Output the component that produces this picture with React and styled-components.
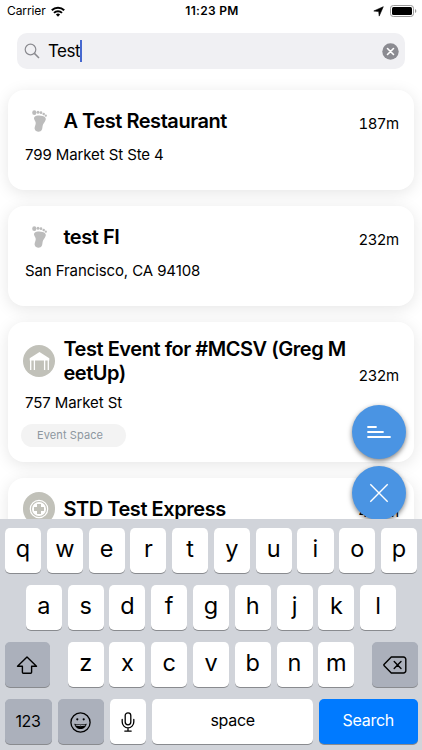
import * as React from "react"
import styled, { createGlobalStyle } from "styled-components"

const FONT = `Inter, "Liberation Sans", sans-serif`
const BLUE = "#4a94e3"
const VENUE = "#c1c1b9"

const GlobalStyle = createGlobalStyle`
	* {
		box-sizing: border-box;
	}
	body {
		margin: 0;
		background: #fff;
		color: #000;
		font-family: ${FONT};
	}
	svg {
		display: block;
		flex: none;
	}
`

const Screen = styled.div`
	position: relative;
	width: 422px;
	height: 750px;
	overflow: hidden;
	display: flex;
	flex-direction: column;
	background: #fff;
`
const StatusBar = styled.div`
	display: grid;
	grid-template-columns: 1fr auto 1fr;
	align-items: center;
	height: 22px;
	padding: 0 5px 0 7px;
	font-size: 12px;
	line-height: 22px;
`
const StatusLeft = styled.div`
	display: flex;
	align-items: center;
	gap: 5px;
	letter-spacing: -0.1px;
`
const StatusRight = styled.div`
	display: flex;
	align-items: center;
	justify-content: flex-end;
	gap: 6px;
`
const Clock = styled.div`
	font-weight: 600;
	letter-spacing: 0.3px;
`
const SearchBar = styled.div`
	display: flex;
	align-items: center;
	height: 36px;
	margin: 11px 17px 0 17px;
	padding: 0 6.5px 0 7px;
	border-radius: 10px;
	background: #f0f0f3;
`
const Query = styled.div`
	margin-left: 8px;
	font-size: 17px;
	line-height: 22px;
	letter-spacing: -0.55px;
`
const Caret = styled.div`
	width: 2px;
	height: 22px;
	margin-right: auto;
	background: #4668cf;
`
const Results = styled.div`
	flex: 1;
	min-height: 0;
	overflow: hidden;
	display: flex;
	flex-direction: column;
	gap: 16px;
	padding: 21px 8px 0 8px;
`
const Card = styled.div`
	flex: none;
	height: ${(p) => (p.$tall ? "139.600px" : "100px")};
	padding: 15px 15px 0 15px;
	border-radius: 16px;
	background: #fff;
	box-shadow: 0 3px 16px rgba(0, 0, 0, 0.1);
`
const CardHead = styled.div`
	display: flex;
	align-items: center;
	gap: 8px;
	min-height: 32px;
`
const Badge = styled.div`
	display: flex;
	align-items: center;
	justify-content: center;
	flex: none;
	width: 32.4px;
	height: 32.4px;
	margin: -1px 0;
	padding-left: ${(p) => (p.$plain ? "1.500px" : "0")};
	border-radius: 50%;
	background: ${(p) => (p.$plain ? "none" : VENUE)};
`
const Heading = styled.div`
	flex: 1;
	display: flex;
	align-items: flex-end;
	justify-content: space-between;
`
const Title = styled.div`
	font-size: 20px;
	line-height: 24px;
	font-weight: 600;
	letter-spacing: -0.45px;
	white-space: pre;
`
const Distance = styled.div`
	font-size: 15px;
	line-height: 18px;
	letter-spacing: -0.6px;
	padding-right: 0.5px;
	font-variant-numeric: tabular-nums;
`
const Address = styled.div`
	margin: 8px 0 0 2px;
	font-size: 15px;
	line-height: 20px;
	letter-spacing: -0.1px;
`
const Tag = styled.div`
	width: 105px;
	height: 23px;
	margin: 11px 0 0 -2px;
	padding-left: 16px;
	border-radius: 12px;
	background: #f3f3f3;
	color: #8d979f;
	font-size: 11px;
	line-height: 22px;
	letter-spacing: 0.1px;
`
const Fabs = styled.div`
	position: absolute;
	right: 16px;
	top: 405px;
	display: flex;
	flex-direction: column;
	gap: 7px;
`
const Fab = styled.div`
	display: flex;
	align-items: center;
	justify-content: center;
	width: 54px;
	height: 54px;
	border-radius: 50%;
	background: ${BLUE};
	box-shadow: 0 2px 5px rgba(0, 0, 0, 0.5);
`
const Keyboard = styled.div`
	position: relative;
	flex: none;
	display: flex;
	flex-direction: column;
	gap: 11px;
	height: 231px;
	padding: 9px 4.5px 0;
	background: #d1d4da;
`
const KeyRow = styled.div`
	display: flex;
	justify-content: ${(p) => (p.$spread ? "space-between" : "center")};
	gap: ${(p) => (p.$spread ? "0" : "5.7px")};
	height: 46px;
`
const KeyGroup = styled.div`
	display: flex;
	gap: 5.7px;
`
const Key = styled.div`
	display: flex;
	align-items: center;
	justify-content: center;
	width: ${(p) => p.$w || 36.1}px;
	height: 45px;
	padding-bottom: 4px;
	border-radius: 5px;
	background: ${(p) => p.$bg || "#fff"};
	color: ${(p) => p.$color || "#000"};
	box-shadow: 0 1px 0 #898b8f;
	font-size: 23.5px;
	font-weight: 400;
`
const IconKey = styled(Key)`
	padding: 1px 0 0;
`
const WordKey = styled(Key)`
	padding-bottom: ${(p) => (p.$low ? "1px" : "4px")};
	font-size: 16px;
	letter-spacing: -0.3px;
`

const GREY_KEY = "#abb0bb"

const Foot = () => (
	<svg width="15" height="22" viewBox="0 0 15 22" fill="#bcbcbc">
		<ellipse cx="2.3" cy="2.7" rx="2.1" ry="2.4" />
		<circle cx="6" cy="2.2" r="1.5" />
		<circle cx="9" cy="2.700" r="1.35" />
		<circle cx="11.700" cy="3.900" r="1.25" />
		<circle cx="13.800" cy="5.700" r="1.15" />
		<path d="M2.4 7C4 5.300 8 5.200 10.600 6C13.300 6.800 14.200 8 13.600 10C13 12.200 11 13.500 10.600 16C10.300 18.200 10.400 20 8.500 21.200C6.500 22.200 3.200 21.500 2.700 19C2.200 16.800 3.900 15 3.700 12.800C3.500 10.500 1 9 2.400 7z" />
	</svg>
)

const Tent = () => (
	<svg width="21" height="20" viewBox="0 0 21 20">
		<path d="M10.500 1L20.300 7.300V9.600H.7V7.300z" fill="#fff" />
		<path d="M1.700 9V19M5.400 9v10M15.600 9v10M19.300 9v10" stroke="#fff" strokeWidth="1.300" />
	</svg>
)

const Medical = () => (
	<svg width="20" height="20" viewBox="0 0 20 20" fill="none">
		<circle cx="10" cy="10" r="8.700" stroke="#fff" strokeWidth="1.200" />
		<circle cx="10" cy="10" r="7" fill="#fff" />
		<path d="M8 5h4v3h3v4h-3v3H8v-3H5V8h3z" fill={VENUE} />
	</svg>
)

const ICONS = { foot: <Foot />, tent: <Tent />, medical: <Medical /> }

const places = [
	{ icon: "foot", title: "A Test Restaurant", distance: "187m", address: "799 Market St Ste 4" },
	{ icon: "foot", title: "test FI", distance: "232m", address: "San Francisco, CA 94108" },
	{
		icon: "tent",
		title: "Test Event for #MCSV (Greg M\neetUp)",
		distance: "232m",
		address: "757 Market St",
		tag: "Event Space",
	},
	{ icon: "medical", title: "STD Test Express", distance: "464m", address: "" },
]

const Place = ({ icon, title, distance, address, tag }) => {
	return (
		<Card $tall={tag}>
			<CardHead>
				<Badge $plain={icon === "foot"}>{ICONS[icon]}</Badge>
				<Heading>
					<Title>{title}</Title>
					<Distance>{distance}</Distance>
				</Heading>
			</CardHead>
			<Address>{address}</Address>
			{tag && <Tag>{tag}</Tag>}
		</Card>
	)
}

const letters = (row) => row.split("").map((c) => <Key key={c}>{c}</Key>)

const App = () => {
	return (
		<Screen>
			<GlobalStyle />
			<StatusBar>
				<StatusLeft>
					Carrier
					<svg width="14" height="11" viewBox="0 0 14 11" fill="none" stroke="#000" strokeWidth="2">
						<path d="M.8 4.300a8.800 8.800 0 0 1 12.400 0" />
						<path d="M3 6.900a5.700 5.700 0 0 1 8 0" />
						<path d="M7 10.800L4.900 8.600a3 3 0 0 1 4.200 0z" fill="#000" stroke="none" />
					</svg>
				</StatusLeft>
				<Clock>11:23 PM</Clock>
				<StatusRight>
					<svg width="11" height="11" viewBox="0 0 11 11">
						<path d="M10.300.7L6.200 10.100 5.700 5.500.8 5z" fill="#000" stroke="#000" strokeWidth=".6" strokeLinejoin="round" />
					</svg>
					<svg width="27" height="12" viewBox="0 0 27 12">
						<rect x=".5" y=".5" width="23" height="11" rx="2.800" fill="none" stroke="#999" />
						<rect x="2" y="2" width="20" height="8" rx="1.500" />
						<path d="M25 4v4c1.800-.7 1.800-3.300 0-4z" fill="#999" />
					</svg>
				</StatusRight>
			</StatusBar>
			<SearchBar>
				<svg width="16" height="16" viewBox="0 0 16 16" fill="none" stroke="#8b8b90" strokeWidth="1.200">
					<circle cx="6.500" cy="6.500" r="5.300" />
					<path d="M10.400 10.400l4.600 4.600" strokeWidth="1.500" />
				</svg>
				<Query>Test</Query>
				<Caret />
				<svg width="17" height="17" viewBox="0 0 17 17">
					<circle cx="8.500" cy="8.500" r="8.200" fill="#8b8b91" />
					<path d="M5.500 5.500l6 6M11.500 5.500l-6 6" stroke="#fff" strokeWidth="1.600" strokeLinecap="round" />
				</svg>
			</SearchBar>
			<Results>
				{places.map((p) => (
					<Place key={p.title} {...p} />
				))}
			</Results>
			<Fabs>
				<Fab>
					<svg width="24" height="14" viewBox="0 0 24 14" stroke="#fff" strokeWidth="1.800" strokeLinecap="round">
						<path d="M1 2h8M1 7h15M1 12h22" />
					</svg>
				</Fab>
				<Fab>
					<svg width="20" height="20" viewBox="0 0 20 20" stroke="#fff" strokeWidth="1.400">
						<path d="M1.300 1.300l17.400 17.400M18.700 1.300l-17.400 17.400" />
					</svg>
				</Fab>
			</Fabs>
			<Keyboard>
				<KeyRow>{letters("qwertyuiop")}</KeyRow>
				<KeyRow>{letters("asdfghjkl")}</KeyRow>
				<KeyRow $spread>
					<IconKey $w={45.5} $bg={GREY_KEY}>
						<svg width="22" height="20" viewBox="0 0 22 20" fill="none" stroke="#000" strokeWidth="1.400" strokeLinejoin="round">
							<path d="M11 2L20.500 11.300H15.600V17.200a1 1 0 0 1-1 1H7.400a1 1 0 0 1-1-1V11.300H1.500z" />
						</svg>
					</IconKey>
					<KeyGroup>{letters("zxcvbnm")}</KeyGroup>
					<IconKey $w={45.5} $bg={GREY_KEY}>
						<svg width="24" height="18" viewBox="0 0 24 18" fill="none" stroke="#000" strokeWidth="1.400" strokeLinejoin="round" strokeLinecap="round">
							<path d="M8.300 1H20.500a2.300 2.300 0 0 1 2.300 2.300V14.700a2.300 2.300 0 0 1-2.300 2.300H8.300L1.200 9.700a1 1 0 0 1 0-1.400z" />
							<path d="M11.200 5.600l6.800 6.800M18 5.600l-6.800 6.800" />
						</svg>
					</IconKey>
				</KeyRow>
				<KeyRow $spread>
					<WordKey $w={47} $bg={GREY_KEY} $low>
						123
					</WordKey>
					<IconKey $w={46.5} $bg={GREY_KEY}>
						<svg width="21" height="21" viewBox="0 0 21 21" fill="none" stroke="#000" strokeWidth="1.300">
							<circle cx="10.500" cy="10.500" r="9.600" />
							<circle cx="7.300" cy="7.300" r="1.100" fill="#000" stroke="none" />
							<circle cx="13.700" cy="7.300" r="1.100" fill="#000" stroke="none" />
							<path d="M4.300 11.700q6.200 1.500 12.400 0c-.5 3-3 5.300-6.200 5.300s-5.700-2.300-6.200-5.300z" fill="#000" stroke="none" />
							<path d="M5.700 13.100q4.800 1.200 9.600 0" stroke="#abb0bb" strokeWidth="1" />
						</svg>
					</IconKey>
					<IconKey $w={36}>
						<svg width="14" height="20" viewBox="0 0 14 20" fill="none" stroke="#000" strokeWidth="1.300" strokeLinecap="round">
							<rect x="4.200" y=".8" width="5.600" height="12" rx="2.800" />
							<path d="M1.200 7.500V10a5.800 5.800 0 0 0 11.600 0V7.500M7 15.800V19M3.800 19.100h6.400" />
						</svg>
					</IconKey>
					<WordKey $w={160.5}>space</WordKey>
					<WordKey $w={98.5} $bg="#007aff" $color="#fff">
						Search
					</WordKey>
				</KeyRow>
			</Keyboard>
		</Screen>
	)
}
export default App
